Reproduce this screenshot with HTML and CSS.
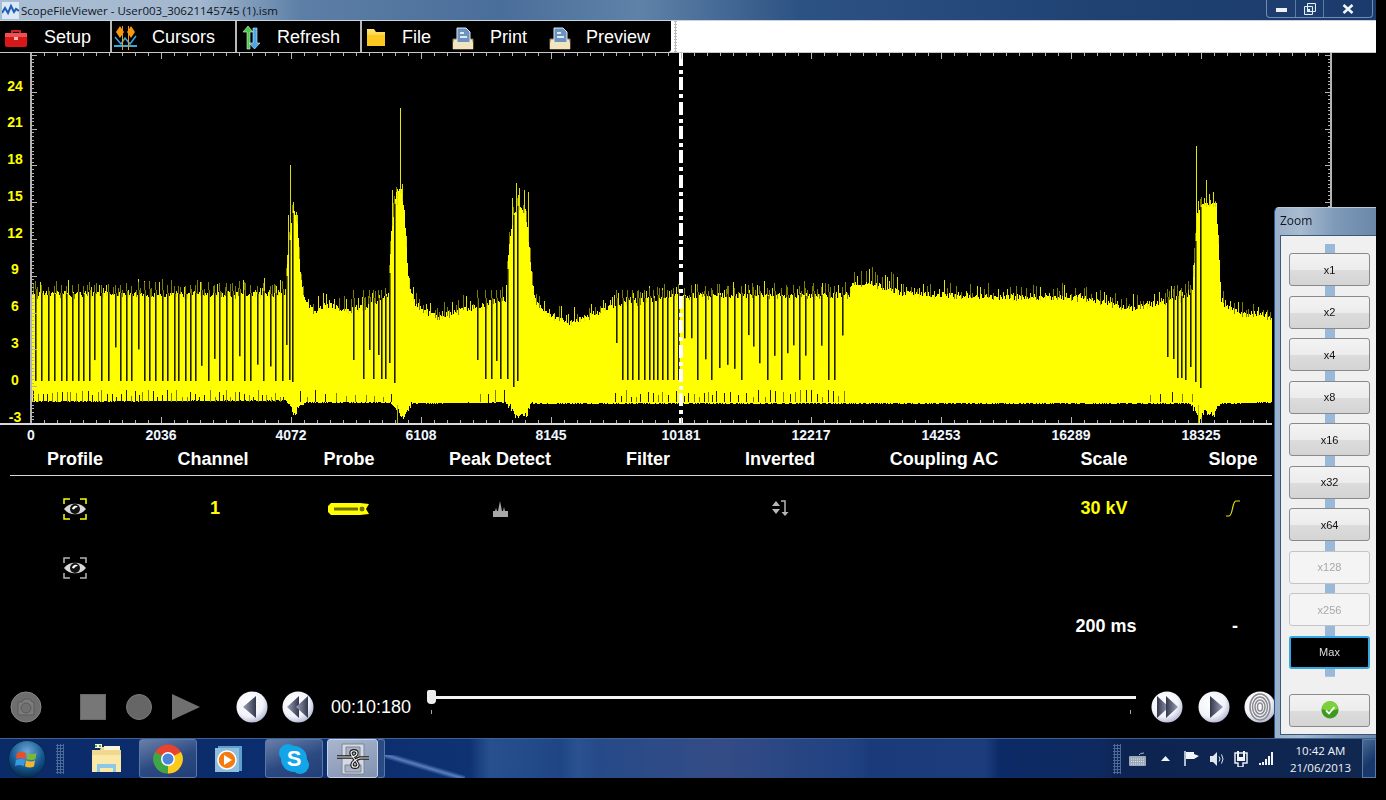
FILE: index.html
```html
<!DOCTYPE html>
<html lang="en">
<head>
  <meta charset="UTF-8">
  <title>ScopeFileViewer</title>
  <link rel="stylesheet" href="styles.css">
</head>
<body>
  <svg class="defs" width="0" height="0">
    <defs>
      <radialGradient id="ball" cx="0.4" cy="0.35" r="0.7">
        <stop offset="0" stop-color="#ffffff"/>
        <stop offset="0.65" stop-color="#f2f3fa"/>
        <stop offset="1" stop-color="#aeb4cf"/>
      </radialGradient>
      <linearGradient id="shade" x1="0" y1="0" x2="1" y2="0">
        <stop offset="0" stop-color="#9aa0b8"/>
        <stop offset="1" stop-color="#34384c"/>
      </linearGradient>
      <linearGradient id="shade-rev" x1="0" y1="0" x2="1" y2="0">
        <stop offset="0" stop-color="#34384c"/>
        <stop offset="1" stop-color="#9aa0b8"/>
      </linearGradient>
      <radialGradient id="orb" cx="0.5" cy="0.3" r="0.75">
        <stop offset="0" stop-color="#6fa8d8"/>
        <stop offset="0.6" stop-color="#12558f"/>
        <stop offset="1" stop-color="#06233f"/>
      </radialGradient>
      <linearGradient id="folder" x1="0" y1="0" x2="0" y2="1">
        <stop offset="0" stop-color="#ffe774"/>
        <stop offset="1" stop-color="#f5b400"/>
      </linearGradient>
      <symbol id="eye" viewBox="0 0 24 24">
        <path d="M1 7V2h6M17 2h6v5M1 17v5h6M17 22h6v-5" fill="none" stroke="currentColor" stroke-width="1.500"/>
        <path d="M1 12C6 5 18 5 23 12C18 19 6 19 1 12Z" fill="#d8d8d8"/>
        <circle cx="12" cy="12" r="5" fill="#111"/>
        <path d="M9 12a3.4 3.4 0 0 1 6 -2a4 4 0 0 0 -4 2.5z" fill="#fff"/>
      </symbol>
      <symbol id="doc-tray" viewBox="0 0 22 24">
        <path d="M1 13h20v10H1z" fill="#f5e6bd" stroke="#8b7a50"/>
        <path d="M5 2h9l4 4v12H5z" fill="#6d94bf" stroke="#dfe9f5"/>
        <path d="M8 6h4v2H8zM8 10h7v2H8z" fill="#dfe9f5"/>
        <path d="M1 16h20v7H1z" fill="#f1e4bf"/>
      </symbol>
    </defs>
  </svg>

  <div class="window">
    <header class="titlebar">
      <svg class="title-icon" width="17" height="17" viewBox="0 0 17 17">
        <rect width="17" height="17" fill="#dce8f6"/>
        <path d="M0 11L3 6L6 11L9 4L12 10L14 7L17 9" fill="none" stroke="#1f5fb0" stroke-width="2"/>
      </svg>
      <span class="title-text">ScopeFileViewer - User003_30621145745 (1).ism</span>
      <div class="caption-btns">
        <div class="caption-btn caption-min"><span></span></div>
        <div class="caption-btn caption-max">
          <svg width="12" height="12" viewBox="0 0 12 12"><path d="M3.5 .5h8v8h-8zM.5 3.5h8v8h-8z" fill="#244a7c" stroke="#e8eef6"/><rect x="3" y="6" width="3" height="3" fill="#e8eef6"/></svg>
        </div>
        <div class="caption-btn caption-close">
          <svg width="12" height="10" viewBox="0 0 12 10"><path d="M1.5 1l9 8M10.500 1l-9 8" stroke="#f2f5fa" stroke-width="2.600"/></svg>
        </div>
      </div>
    </header>

    <nav class="toolbar">
      <div class="tool-group tool-setup">
        <svg width="22" height="18" viewBox="0 0 22 18">
          <path d="M7 5V2h8v3" fill="none" stroke="#d02020" stroke-width="2"/>
          <rect y="4" width="22" height="14" rx="2" fill="#d81818"/>
          <rect y="4" width="22" height="4" fill="#f05050"/>
          <rect x="9" y="8" width="4" height="3" fill="#ffc0c0"/>
        </svg>
        <span>Setup</span>
      </div>
      <div class="tool-group tool-cursors">
        <svg width="23" height="26" viewBox="0 0 23 26">
          <path d="M6 1l4 6l-4 6l-4 -6zM17 1l4 6l-4 6l-4 -6z" fill="#f59a10"/>
          <path d="M1 12l6 7l4 -6l5 6l6 -8" fill="none" stroke="#39a9e0" stroke-width="1.500"/>
          <path d="M0 21h23" stroke="#39a9e0" stroke-width="2"/>
          <path d="M8.500 1v24M14.500 1v24" stroke="#f59a10"/>
        </svg>
        <span>Cursors</span>
      </div>
      <div class="tool-group tool-refresh">
        <svg width="21" height="25" viewBox="0 0 21 25">
          <path d="M7 24V7H3L8 1l5 6H10v17z" fill="#49c84a" stroke="#d8f8d8" stroke-width=".6"/>
          <path d="M13 3v15H9l5.500 6L20 18h-3V3z" fill="#4aa8ea" stroke="#d8eefc" stroke-width=".6"/>
        </svg>
        <span>Refresh</span>
      </div>
      <div class="tool-group tool-files">
        <svg class="icon-file" width="20" height="19" viewBox="0 0 20 19">
          <path d="M1 1h7l2 3h9v14H1z" fill="url(#folder)"/>
          <path d="M1 7h18v11H1z" fill="#fdc81f"/>
        </svg>
        <span class="label-file">File</span>
        <svg class="icon-print" width="22" height="24"><use href="#doc-tray"/></svg>
        <span class="label-print">Print</span>
        <svg class="icon-preview" width="22" height="24"><use href="#doc-tray"/></svg>
        <span class="label-preview">Preview</span>
      </div>
      <div class="tool-rest"></div>
    </nav>

    <section class="scope">
      <div class="y-axis">
        <span>24</span><span>21</span><span>18</span><span>15</span><span>12</span>
        <span>9</span><span>6</span><span>3</span><span>0</span><span>-3</span>
      </div>
      <canvas id="wave" width="1302" height="370"></canvas>
    </section>
    <div class="scope-rule"></div>

    <div class="x-axis">
      <span>0</span><span>2036</span><span>4072</span><span>6108</span><span>8145</span>
      <span>10181</span><span>12217</span><span>14253</span><span>16289</span><span>18325</span>
    </div>

    <div class="grid-head">
      <div class="cells">
        <span>Profile</span><span>Channel</span><span>Probe</span><span>Peak Detect</span><span>Filter</span>
        <span>Inverted</span><span>Coupling AC</span><span>Scale</span><span>Slope</span>
      </div>
    </div>

    <div class="cells row row-active">
      <span><svg class="eye" width="24" height="24"><use href="#eye"/></svg></span>
      <span class="nudge">1</span>
      <span>
        <svg width="42" height="14" viewBox="0 0 42 14">
          <path d="M3 1h29l9 1l-3 5l3 5l-9 1H3l-3 -3V4z" fill="#ffff00"/>
          <path d="M6 7h24" stroke="#6d6d00" stroke-width="3"/>
          <circle cx="34" cy="7" r="3" fill="#6d6d00" stroke="#ffff00"/>
        </svg>
      </span>
      <span>
        <svg width="15" height="16" viewBox="0 0 15 16"><path d="M0 16V10h2l1 -3l1 3h1l2 -10l2 10h1l1 -4l1 4h3v6z" fill="#a8a8a8"/></svg>
      </span>
      <span></span>
      <span>
        <svg width="18" height="17" viewBox="0 0 18 17">
          <path d="M1 6l4 -5l4 5zM1 9h8l-4 5z" fill="#b8b8b8"/>
          <path d="M10 1h4v12" fill="none" stroke="#b8b8b8" stroke-width="1.500"/>
          <path d="M10.500 12h7l-3.500 4z" fill="#b8b8b8"/>
        </svg>
      </span>
      <span></span>
      <span>30 kV</span>
      <span>
        <svg width="14" height="17" viewBox="0 0 14 17"><path d="M0 16h3C7 16 6 1 10 1h4" fill="none" stroke="#e8e800" stroke-width="1.200"/></svg>
      </span>
    </div>
    <div class="cells row">
      <span><svg class="eye eye-off" width="24" height="24"><use href="#eye"/></svg></span>
    </div>
    <div class="cells row row-time">
      <span></span><span></span><span></span><span></span><span></span><span></span><span></span>
      <span class="nudge">200 ms</span><span class="nudge">-</span>
    </div>

    <div class="transport">
      <svg class="t-camera" width="32" height="32" viewBox="0 0 32 32">
        <circle cx="16" cy="16" r="15" fill="#6e6e6e"/>
        <circle cx="16" cy="16" r="15" fill="none" stroke="#888"/>
        <path d="M8 11h4l2 -3h6l2 3h2v13H8z" fill="#7c7c7c" stroke="#5a5a5a"/>
        <circle cx="16" cy="17" r="5" fill="#707070" stroke="#5a5a5a"/>
      </svg>
      <div class="t-stop"></div>
      <div class="t-record"></div>
      <svg class="t-play" width="28" height="26" viewBox="0 0 28 26"><path d="M0 0l28 13L0 26z" fill="#707070"/></svg>

      <svg class="t-ball t-prev" width="32" height="32" viewBox="0 0 32 32">
        <circle cx="16" cy="16" r="15.500" fill="url(#ball)"/>
        <path d="M20 5v22L7 16z" fill="url(#shade)"/>
      </svg>
      <svg class="t-ball t-prev-fast" width="32" height="32" viewBox="0 0 32 32">
        <circle cx="16" cy="16" r="15.500" fill="url(#ball)"/>
        <path d="M17 5v22L5 16z" fill="url(#shade)"/>
        <path d="M26 5v22L14 16z" fill="url(#shade)"/>
      </svg>
      <span class="t-time">00:10:180</span>

      <div class="slider">
        <div class="slider-track"></div>
        <div class="slider-thumb"></div>
        <i class="slider-mark slider-mark-a"></i>
        <i class="slider-mark slider-mark-b"></i>
      </div>

      <svg class="t-ball t-next-fast" width="32" height="32" viewBox="0 0 32 32">
        <circle cx="16" cy="16" r="15.500" fill="url(#ball)"/>
        <path d="M6 5v22L18 16z" fill="url(#shade-rev)"/>
        <path d="M15 5v22L27 16z" fill="url(#shade-rev)"/>
      </svg>
      <svg class="t-ball t-next" width="32" height="32" viewBox="0 0 32 32">
        <circle cx="16" cy="16" r="15.500" fill="url(#ball)"/>
        <path d="M12 5v22L25 16z" fill="url(#shade-rev)"/>
      </svg>
      <svg class="t-ball t-print" width="32" height="32" viewBox="0 0 32 32">
        <circle cx="16" cy="16" r="15.500" fill="url(#ball)"/>
        <g fill="none" stroke="#8a8a90" stroke-width="1.500">
          <ellipse cx="16" cy="16" rx="2.500" ry="4"/>
          <ellipse cx="16" cy="16" rx="5" ry="7"/>
          <ellipse cx="16" cy="16" rx="7.500" ry="10"/>
          <ellipse cx="16" cy="16" rx="10" ry="13"/>
        </g>
      </svg>
    </div>

    <footer class="taskbar">
      <svg class="orb" width="38" height="38" viewBox="0 0 38 38">
        <circle cx="19" cy="19" r="18.500" fill="url(#orb)" stroke="#0a2a4a"/>
        <path d="M9 13q4 -2 9 0l-1 6q-5 -2 -9 0z" fill="#e8502a"/>
        <path d="M19.500 13q5 2 9 0l-1 6q-4 2 -9 0z" fill="#7ab83a"/>
        <path d="M8 20q4 -2 9 0l-1 6q-5 -2 -9 0z" fill="#3a9ae0"/>
        <path d="M18 20.500q5 2 9 0l-1 6q-4 2 -9 0z" fill="#f4b62a"/>
      </svg>
      <div class="grip grip-start"></div>

      <svg class="task-icon task-explorer" width="33" height="32" viewBox="0 0 33 32">
        <path d="M2 7h8l1 -3h12v3h8v22H2z" fill="#f0d890"/>
        <path d="M5 1h7v4H5zM14 3h16v4H14z" fill="#faf4d8"/>
        <path d="M2 12h29v17H2z" fill="#fbe9a8"/>
        <path d="M7 21h19v8h-3v-4H10v4H7z" fill="#8cc8ea"/>
        <path d="M5 2h2v2H5zM9 2h2v2H9z" fill="#50b050"/>
      </svg>

      <div class="task-btn task-chrome">
        <svg width="30" height="30" viewBox="0 0 30 30">
          <circle cx="15" cy="15" r="14.500" fill="#e8432e"/>
          <path d="M15 15L28 8A14.500 14.500 0 0 1 15 29.500z" fill="#fbcb1c"/>
          <path d="M15 15L15 29.500A14.500 14.500 0 0 1 2 8z" fill="#3fa648"/>
          <circle cx="15" cy="15" r="7" fill="#fff"/>
          <circle cx="15" cy="15" r="5.500" fill="#4a86dc"/>
        </svg>
      </div>

      <svg class="task-icon task-wmp" width="27" height="26" viewBox="0 0 27 26">
        <rect x="3" y="0" width="24" height="25" fill="#5f9fcc"/>
        <rect y="2" width="24" height="24" fill="#8ebfdf"/>
        <circle cx="12" cy="14" r="9" fill="#f47a12" stroke="#fff" stroke-width="1.500"/>
        <path d="M9 9l8 5l-8 5z" fill="#fff"/>
      </svg>

      <div class="task-btn task-skype">
        <svg width="32" height="32" viewBox="0 0 32 32">
          <circle cx="10" cy="10" r="9" fill="#12a5e8"/>
          <circle cx="22" cy="22" r="9" fill="#12a5e8"/>
          <circle cx="16" cy="16" r="13" fill="#12a5e8"/>
          <text x="16" y="23" text-anchor="middle" class="skype-s">S</text>
        </svg>
      </div>

      <div class="task-btn task-scope">
        <svg width="34" height="34" viewBox="0 0 34 34">
          <path d="M6 2h22v30H6z" fill="#d4dae4" stroke="#7a8496"/>
          <path d="M10 5h14v9H10z" fill="#aab4c4" stroke="#7a8496"/>
          <path d="M9 23h16v7H9z" fill="#aab4c4" stroke="#7a8496"/>
          <path d="M1 15h12c5 0 8 -1 8 -4s-6 -3 -6 0s7 9 7 12s-6 3 -6 0s4 -6 8 -7h9" fill="none" stroke="#1a1a1a" stroke-width="3.400"/>
          <path d="M1 15h12c5 0 8 -1 8 -4s-6 -3 -6 0s7 9 7 12s-6 3 -6 0s4 -6 8 -7h9" fill="none" stroke="#f4f4f4" stroke-width="1.200"/>
        </svg>
      </div>
      <div class="task-stack"></div>

      <div class="tray">
        <div class="grip"></div>
        <svg class="tray-kbd" width="17" height="14" viewBox="0 0 17 14">
          <path d="M10 3q1 -2 5 -2" fill="none" stroke="#a8b8c8"/>
          <rect y="4" width="17" height="10" rx="1" fill="#9aa8b8"/>
          <path d="M2 7h13M2 9.500h13M2 12h13" stroke="#dde4ec" stroke-dasharray="1 1"/>
        </svg>
        <svg class="tray-up" width="9" height="5" viewBox="0 0 9 5"><path d="M0 5l4.500 -5L9 5z" fill="#eef3f8"/></svg>
        <svg class="tray-flag" width="15" height="15" viewBox="0 0 15 15"><path d="M1 0v15" stroke="#e8edf4" stroke-width="1.500"/><path d="M2 1h8v2l5 2l-5 3H2z" fill="#f2f5f9"/></svg>
        <svg class="tray-vol" width="15" height="14" viewBox="0 0 15 14">
          <path d="M0 4h3l4 -4v14l-4 -4H0z" fill="#dfe6ee"/>
          <path d="M9 4.500q2 2.500 0 5M11.500 2.500q3 4.500 0 9" fill="none" stroke="#dfe6ee"/>
        </svg>
        <svg class="tray-power" width="14" height="16" viewBox="0 0 14 16">
          <path d="M1 2h12v10H9v4H4v-4H1z" fill="none" stroke="#e8edf4" stroke-width="1.500"/>
          <path d="M4 0v6M10 0v6" stroke="#f4f6fa" stroke-width="2"/>
          <path d="M3 6h8v4H3z" fill="#f4f6fa"/>
        </svg>
        <svg class="tray-signal" width="15" height="13" viewBox="0 0 15 13">
          <path d="M0 11h2v2H0zM3 10h2v3H3zM6 7h2v6H6zM9 4h2v9H9zM12 0h2v13h-2z" fill="#f0f4f8"/>
        </svg>
        <div class="clock"><span>10:42 AM</span><span>21/06/2013</span></div>
        <div class="show-desktop"></div>
      </div>
    </footer>
  </div>

  <aside class="zoom-dialog">
    <div class="zoom-title">Zoom</div>
    <div class="zoom-panel">
      <div class="zoom-stack">
        <button class="zoom-btn">x1</button>
        <button class="zoom-btn">x2</button>
        <button class="zoom-btn">x4</button>
        <button class="zoom-btn">x8</button>
        <button class="zoom-btn">x16</button>
        <button class="zoom-btn">x32</button>
        <button class="zoom-btn">x64</button>
        <button class="zoom-btn is-disabled">x128</button>
        <button class="zoom-btn is-disabled">x256</button>
        <button class="zoom-btn is-current">Max</button>
      </div>
      <button class="zoom-btn zoom-ok">
        <svg width="18" height="18" viewBox="0 0 18 18">
          <circle cx="9" cy="9" r="8.500" fill="#3d9a1e"/>
          <path d="M1 8a8 8 0 0 1 16 0q-8 3 -16 0z" fill="#7cd03c"/>
          <path d="M5 9.500l3 3l5.500 -6.500" fill="none" stroke="#fff" stroke-width="1.800"/>
        </svg>
      </button>
    </div>
  </aside>

  <script src="script.js"></script>
</body>
</html>
```

FILE: styles.css
```css
* {
  box-sizing: border-box;
}
html, body {
  margin: 0;
  padding: 0;
  height: 800px;
  overflow: hidden;
  background: #000;
}
body {
  font-family: "Liberation Sans", Arial, sans-serif;
  color: #fff;
  position: relative;
}
.defs {
  position: absolute;
}
.window {
  width: 1376px;
  height: 778px;
  display: flex;
  flex-direction: column;
}

/* title bar */
.titlebar {
  height: 20px;
  flex: none;
  display: flex;
  align-items: center;
  background: linear-gradient(90deg, #a9bdd2 0, #a3b8cf 200px, #5d7fa6 300px, #4a6e9a 500px, #5f82a8 640px, #2c5283 800px, #1f4273 1100px, #1b3b6c 1376px);
}
.title-icon {
  margin-left: 2px;
  margin-top: 1px;
}
.title-text {
  margin-left: 2px;
  font-family: "Open Sans", sans-serif;
  font-size: 11.5px;
  color: #10151c;
}
.caption-btns {
  margin-left: auto;
  margin-right: 3px;
  height: 18px;
  margin-top: -2px;
  display: flex;
  border: 1px solid #6f8db3;
  border-top: none;
  border-radius: 0 0 4px 4px;
}
.caption-btn {
  display: flex;
  align-items: center;
  justify-content: center;
  border-right: 1px solid #5d7ca3;
}
.caption-min {
  width: 29px;
}
.caption-min span {
  width: 11px;
  height: 4px;
  margin-top: 3px;
  background: #eef2f7;
}
.caption-max {
  width: 28px;
}
.caption-close {
  width: 48px;
  border-right: none;
}

/* toolbar */
.toolbar {
  height: 33px;
  flex: none;
  display: flex;
  background: #fff;
  border-top: 1px solid #c9d3de;
  border-bottom: 1px solid #c8c8c8;
}
.tool-group {
  height: 100%;
  flex: none;
  display: flex;
  align-items: center;
  padding-top: 2px;
  background: #000;
  border-right: 2px solid #b8b8b8;
  font-size: 18px;
  color: #fff;
}
.tool-setup {
  width: 112px;
  padding-left: 3px;
  gap: 17px;
  border-left: 2px solid #000;
}
.tool-cursors {
  width: 125px;
  padding-left: 2px;
  gap: 15px;
}
.tool-refresh {
  width: 125px;
  padding-left: 3px;
  gap: 16px;
}
.tool-files {
  width: 309px;
  padding-left: 4px;
  border-right: none;
  border-radius: 0 0 3px 0;
}
.label-file {
  margin-left: 16px;
}
.icon-print {
  margin-left: 21px;
}
.label-print {
  margin-left: 16px;
}
.icon-preview {
  margin-left: 22px;
}
.label-preview {
  margin-left: 15px;
}
.tool-rest {
  flex: 1;
  background:
    radial-gradient(circle, #bbb 1px, transparent 1.2px) 3px 2px / 3px 3px repeat-y,
    #fff;
}

/* scope */
.scope {
  height: 370px;
  flex: none;
  display: flex;
}
.y-axis {
  width: 30px;
  flex: none;
  height: 370px;
  padding: 26.5px 0 0 1px;
  display: flex;
  flex-direction: column;
  gap: 23.8px;
  text-align: center;
  font-size: 14px;
  line-height: 13px;
  font-weight: bold;
  color: #ffff00;
}
.y-axis span {
  padding-right: 1px;
}
#wave {
  display: block;
  flex: none;
}
.scope-rule {
  width: 1272px;
  height: 2px;
  flex: none;
  background: #d8d8d8;
}
.x-axis {
  height: 22px;
  flex: none;
  margin-left: -34px;
  display: flex;
  font-size: 14px;
  line-height: 20px;
  font-weight: bold;
  color: #eef6ff;
}
.x-axis span {
  width: 130px;
  flex: none;
  text-align: center;
}

/* channel table */
.grid-head {
  width: 1262px;
  height: 29px;
  flex: none;
  margin-left: 10px;
  border-bottom: 1px solid #d8d8d8;
  font-size: 18px;
  line-height: 25px;
  font-weight: bold;
}
.cells {
  display: grid;
  grid-template-columns: 130px 146px 126px 176px 120px 144px 184px 136px 122px;
  text-align: center;
}
.row {
  height: 59px;
  flex: none;
  margin-left: 10px;
  font-size: 18px;
  font-weight: bold;
  align-items: center;
  color: #ffff00;
}
.row-active {
  margin-top: 3px;
}
.row span {
  display: flex;
  justify-content: center;
  align-items: center;
}
.row .nudge {
  padding-left: 4px;
}
.row-time {
  color: #fff;
}
.eye {
  color: #ffff00;
}
.eye-off {
  color: #b4b4b4;
}

/* playback controls */
.transport {
  height: 38px;
  flex: none;
  margin-top: 32px;
  display: flex;
  align-items: center;
  color: #fff;
}
.t-camera {
  margin-left: 10px;
}
.t-stop {
  width: 26px;
  height: 26px;
  margin-left: 38px;
  background: #777;
  border: 1px solid #666;
}
.t-record {
  width: 26px;
  height: 26px;
  margin-left: 20px;
  border-radius: 50%;
  background: #666;
  border: 1px solid #7c7c7c;
}
.t-play {
  margin-left: 20px;
}
.t-prev {
  margin-left: 36px;
}
.t-prev-fast {
  margin-left: 14px;
}
.t-time {
  margin-left: 17px;
  width: 82px;
  flex: none;
  font-size: 18px;
}
.slider {
  width: 708px;
  height: 38px;
  flex: none;
  margin-left: 15px;
  position: relative;
}
.slider-track {
  position: absolute;
  left: 3px;
  right: 0;
  top: 8px;
  height: 3px;
  background: #f4f4f4;
}
.slider-thumb {
  position: absolute;
  left: -1px;
  top: 2px;
  width: 9px;
  height: 14px;
  background: #eee;
  border-radius: 2px 2px 4px 4px;
}
.slider-mark {
  position: absolute;
  top: 22px;
  width: 1px;
  height: 4px;
  background: #aaa;
}
.slider-mark-a {
  left: 3px;
}
.slider-mark-b {
  left: 702px;
}
.t-next-fast {
  margin-left: 15px;
}
.t-next {
  margin-left: 15px;
}
.t-print {
  margin-left: 14px;
}
.t-ball {
  flex: none;
}

/* taskbar */
.taskbar {
  height: 40px;
  flex: none;
  margin-top: auto;
  display: flex;
  align-items: center;
  border-top: 1px solid #3c6296;
  background:
    linear-gradient(to top right, rgba(120, 160, 225, 0) 42%, rgba(120, 160, 225, .7) 50%, rgba(120, 160, 225, 0) 58%) 385px 16px / 80px 24px no-repeat,
    linear-gradient(90deg, #0b2a68 0, #0d2f70 385px, #0f3372 470px, #28508f 490px, #1f4585 560px, #2a5190 578px, #264a88 600px, #344c86 720px, #1f4080 860px, #1a3a7a 870px, #1c3c7c 985px, #0c2a66 1000px, #0f2a60 1100px, #0d2452 1120px, #10274f 1376px);
}
.orb {
  margin-left: 8px;
  flex: none;
}
.grip {
  width: 8px;
  height: 30px;
  flex: none;
  background: radial-gradient(circle, #4a6a9a 1px, transparent 1.2px) 0 0 / 3px 3px;
}
.grip-start {
  margin-left: 10px;
}
.task-icon {
  flex: none;
}
.task-explorer {
  margin-left: 26px;
}
.task-btn {
  height: 39px;
  flex: none;
  display: flex;
  align-items: center;
  justify-content: center;
  border: 1px solid #5a78a8;
  border-radius: 3px;
  background: linear-gradient(160deg, #6a7fa8, #2c4a82 55%, #223e78);
}
.task-chrome {
  width: 58px;
  margin-left: 16px;
}
.task-wmp {
  margin-left: 18px;
}
.task-skype {
  width: 58px;
  margin-left: 23px;
}
.skype-s {
  fill: #fff;
  font-family: "Liberation Sans", sans-serif;
  font-size: 22px;
  font-weight: bold;
}
.task-scope {
  width: 51px;
  margin-left: 4px;
  background: linear-gradient(160deg, #aab6cc, #8192b2);
  border-color: #c8d2e2;
}
.task-stack {
  width: 7px;
  height: 39px;
  flex: none;
  border: 1px solid #5a78a8;
  border-left: none;
  background: #2c4a82;
  border-radius: 0 3px 3px 0;
}
.tray {
  margin-left: auto;
  display: flex;
  align-items: center;
}
.tray-kbd {
  margin-left: 8px;
}
.tray-up {
  margin-left: 15px;
}
.tray-flag {
  margin-left: 14px;
}
.tray-vol {
  margin-left: 11px;
}
.tray-power {
  margin-left: 9px;
}
.tray-signal {
  margin-left: 11px;
}
.clock {
  width: 88px;
  flex: none;
  padding-left: 5px;
  display: flex;
  flex-direction: column;
  text-align: center;
  font-family: "Open Sans", sans-serif;
  font-size: 11.5px;
  line-height: 17px;
  color: #f0f4f8;
}
.show-desktop {
  width: 14px;
  height: 39px;
  flex: none;
  border: 1px solid #5a7aa8;
  background: linear-gradient(135deg, #4a6a94, #18386c 60%);
}

/* floating zoom window */
.zoom-dialog {
  position: absolute;
  left: 1274px;
  top: 207px;
  width: 102px;
  height: 531px;
  display: flex;
  flex-direction: column;
  border-radius: 5px 0 0 0;
  background: linear-gradient(90deg, #9ab0c8 0, #a8bbd0 25px, #7e9ab9 60px, #6a87a8 102px);
  border-top: 1px solid #b8c8da;
  border-left: 1px solid #2a5a92;
}
.zoom-title {
  height: 27px;
  flex: none;
  padding-left: 5px;
  font-family: "Open Sans", sans-serif;
  font-size: 12px;
  line-height: 25px;
  color: #10151c;
}
.zoom-panel {
  flex: 1;
  margin: 0 0 3px 5px;
  padding-left: 8px;
  background: #f0f0f0;
  border-top: 1px solid #3c5878;
  border-left: 1px solid #3c5878;
  border-bottom: 1px solid #3c5878;
}
.zoom-stack {
  width: 81px;
  margin-top: 8px;
  padding: 9px 0 8px;
  display: flex;
  flex-direction: column;
  gap: 9.5px;
  background: linear-gradient(#9ab8d8, #9ab8d8) center / 10px 100% no-repeat;
}
.zoom-btn {
  width: 81px;
  height: 33px;
  flex: none;
  padding: 0;
  display: flex;
  align-items: center;
  justify-content: center;
  font-family: "Liberation Sans", sans-serif;
  font-size: 11px;
  color: #111;
  border: 1px solid #8a8a8a;
  border-radius: 3px;
  background: linear-gradient(#f3f3f3, #ececec 50%, #dcdcdc 52%, #d4d4d4);
}
.is-disabled {
  color: #a8a8a8;
  border-color: #c4c4c4;
  background: #f4f4f4;
}
.is-current {
  color: #ddd;
  background: #000;
  border: 2px solid #34a8e0;
}
.zoom-ok {
  margin-top: 17px;
}
```

FILE: script.js
```js
// draws the scope trace and its tick marks onto the canvas
var canvas = document.getElementById('wave');
var ctx = canvas.getContext('2d');

var seed = 20130621;
function rnd() {
  seed = (seed * 1664525 + 1013904223) % 4294967296;
  return seed / 4294967296;
}

function interp(points, x) {
  for (var i = 1; i < points.length; i++) {
    if (x <= points[i][0]) {
      var a = points[i - 1], b = points[i];
      return a[1] + (b[1] - a[1]) * (x - a[0]) / (b[0] - a[0]);
    }
  }
  return points[points.length - 1][1];
}

// page coordinates, canvas starts at x=30 y=53
ctx.translate(-30, -53);

var TOP = [[31,294],[285,294],[287,262],[290,232],[293,207],[297,222],[300,272],[304,300],[315,312],[325,304],[350,310],[380,301],[388,295],[391,232],[396,190],[401,190],[404,210],[407,262],[409,290],[415,303],[430,314],[440,316],[460,310],[475,307],[505,299],[509,242],[513,216],[518,207],[525,210],[529,247],[532,282],[536,304],[550,315],[570,322],[590,315],[620,303],[680,296],[849,295],[852,284],[870,282],[885,287],[900,293],[1000,297],[1080,297],[1100,301],[1130,309],[1165,301],[1185,296],[1192,291],[1197,212],[1203,204],[1216,204],[1218,242],[1221,299],[1226,307],[1240,313],[1272,315]];
var BOTTOM = [[31,401],[285,400],[290,405],[294,413],[298,408],[305,402],[390,402],[398,410],[402,417],[405,412],[407,410],[412,403],[505,402],[512,408],[516,417],[522,412],[526,416],[530,405],[535,403],[1190,403],[1196,412],[1199,420],[1205,410],[1214,415],[1218,405],[1222,403],[1272,402]];

var YELLOW = '#ffff00', OLIVE = '#7c7c00', DARK = '#1f1f00';

var tops = {};
for (var x = 31; x < 1272; x++) {
  var inBody = x > 287 && x < 300 || x > 389 && x < 409 || x > 507 && x < 532 || x > 1195 && x < 1219;
  var n = inBody ? 1.5 : 3;
  var yTop = Math.round(interp(TOP, x) + (rnd() - 0.5) * n * 2);
  tops[x] = yTop;
  var yBottom = interp(BOTTOM, x);
  // the dips under each burst are ragged
  if (yBottom > 404) {
    yBottom += (rnd() - 0.5) * 7;
  }
  ctx.fillStyle = YELLOW;
  ctx.fillRect(x, yTop, 1, Math.round(yBottom + rnd()) - yTop);
}

// teeth along the top of the trace
for (x = 33; x < 1272; x += 2 + Math.floor(rnd() * 4)) {
  var up = 3 + Math.floor(rnd() * 11);
  if (x > 850 && x < 900) {
    up += 4;
  }
  ctx.fillStyle = rnd() < 0.55 ? OLIVE : '#e4e400';
  ctx.fillRect(x, tops[x] - up, 1, up + 2);
}

// tall single spikes, each one reaches down into the body
var SPIKES = [[288,215],[290,165],[293,202],[297,215],[392,190],[395,205],[397,205],[400,108],[402,184],[512,198],[516,183],[519,188],[524,190],[528,192],[1196,146],[1193,265],[1206,180],[1198,201],[1201,205],[1210,200],[1213,200],[1215,202],[1171,286],[1180,290],[1188,290]];
SPIKES.forEach(function (s) {
  ctx.fillStyle = s[1] < 150 ? '#e8e800' : '#dcdc00';
  ctx.fillRect(s[0], s[1], 1, tops[s[0]] - s[1] + 3);
});

function dropout(x, depth) {
  var start = Math.min(tops[x] || 300, 300) - 4;
  ctx.fillStyle = OLIVE;
  ctx.fillRect(x, start - 6, 1, 8);
  ctx.fillRect(x + 1, start + 2, 1, depth - start - 2);
  ctx.fillStyle = DARK;
  ctx.fillRect(x, start + 2, 1, depth - start - 2);
}

// dropouts: the dark vertical gaps in the burst
var p;
for (p = 35; p < 286; p += 4.500 + rnd() * 3) {
  dropout(Math.round(p), rnd() < 0.8 ? 381 : 345 + rnd() * 25);
}
[[286,345],[289,380],[292,382],[353,360],[363,379],[369,350],[373,379],[378,355],[381,379],[385,379],[389,363],[394,383],
 [477,360],[485,379],[491,379],[496,361],[500,379],[507,379],[513,387],[517,381],
 [1167,357],[1173,359],[1177,378],[1181,378],[1185,380],[1190,367],[1195,382],[1200,388]].forEach(function (d) {
  dropout(d[0], d[1]);
});
for (p = 616; p < 680; p += 4 + rnd() * 2) {
  dropout(Math.round(p), p < 620 ? 343 : 380);
}
for (p = 684; p < 848; p += 5 + rnd() * 3.500) {
  dropout(Math.round(p), rnd() < 0.45 ? 380 : 335 + rnd() * 40);
}

// notches on the lower edge of the trace
function notch(from, to, step) {
  for (var q = from; q < to; q += step + rnd() * step) {
    var h = 5 + Math.floor(rnd() * 8);
    ctx.fillStyle = rnd() < 0.5 ? DARK : OLIVE;
    ctx.fillRect(Math.round(q), 402 - h, 1, h);
  }
}
notch(33, 285, 3);
notch(300, 392, 6);
notch(480, 510, 6);
notch(615, 848, 4);
notch(1150, 1195, 6);
ctx.fillStyle = '#b8b800';
ctx.fillRect(397, 405, 1, 18);
ctx.fillRect(1198, 405, 1, 18);

// cursor line
ctx.fillStyle = '#fff';
for (var y = 53; y < 423; y += 24.3) {
  var yy = Math.round(y);
  ctx.fillRect(679, yy, 4, 13);
  ctx.fillRect(679, yy + 17, 4, 4);
}

// axes
ctx.fillStyle = '#b4b4b4';
ctx.fillRect(30, 53, 2, 370);
ctx.fillRect(1330, 53, 2, 155);
var i = 0, major;
for (y = 423; y > 53; y -= 3.68) {
  major = i % 10 === 0;
  ctx.fillRect(32, Math.round(y), major ? 5 : 2, 1);
  ctx.fillRect(major ? 1325 : 1328, Math.round(y), major ? 5 : 2, 1);
  i++;
}
i = 0;
for (x = 31; x < 1332; x += 13) {
  major = i % 10 === 0;
  ctx.fillRect(x, 53, 1, major ? 6 : 3);
  if (x < 1272) {
    ctx.fillRect(x, major ? 417 : 420, 1, major ? 6 : 3);
  }
  i++;
}
```
